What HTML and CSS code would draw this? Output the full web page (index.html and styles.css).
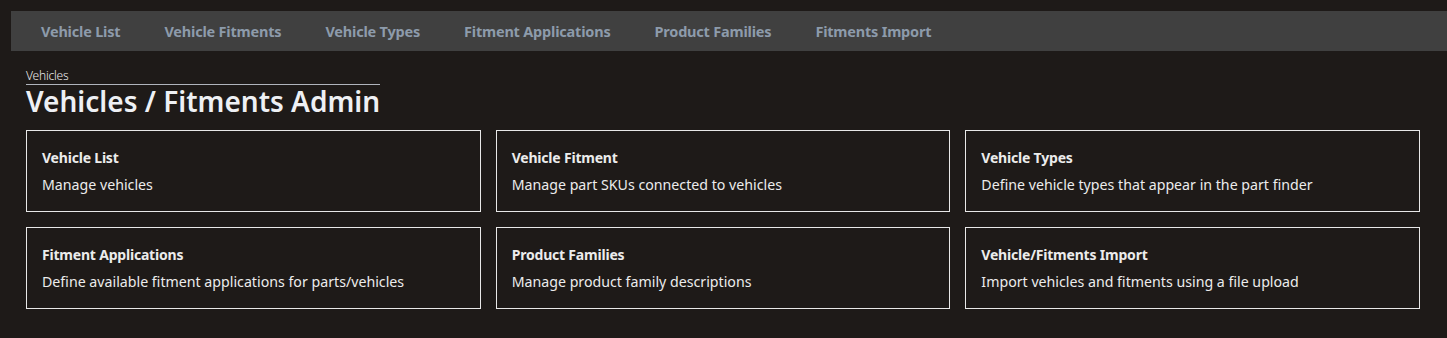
FILE: index.html
```html
<!DOCTYPE html>
<html>
<head>
<meta charset="utf-8">
<link rel="stylesheet" href="styles.css">
</head>
<body>
<nav class="topnav">
  <a class="nav-item">Vehicle List</a>
  <a class="nav-item">Vehicle Fitments</a>
  <a class="nav-item">Vehicle Types</a>
  <a class="nav-item">Fitment Applications</a>
  <a class="nav-item">Product Families</a>
  <a class="nav-item">Fitments Import</a>
</nav>
<main class="content">
  <header class="page-header">
    <div class="breadcrumb">Vehicles</div>
    <h1 class="title">Vehicles / Fitments Admin</h1>
  </header>
  <section class="cards">
    <div class="card"><div class="card-title">Vehicle List</div><div class="card-desc">Manage vehicles</div></div>
    <div class="card"><div class="card-title">Vehicle Fitment</div><div class="card-desc">Manage part SKUs connected to vehicles</div></div>
    <div class="card"><div class="card-title">Vehicle Types</div><div class="card-desc">Define vehicle types that appear in the part finder</div></div>
    <div class="card"><div class="card-title">Fitment Applications</div><div class="card-desc">Define available fitment applications for parts/vehicles</div></div>
    <div class="card"><div class="card-title">Product Families</div><div class="card-desc">Manage product family descriptions</div></div>
    <div class="card"><div class="card-title">Vehicle/Fitments Import</div><div class="card-desc">Import vehicles and fitments using a file upload</div></div>
  </section>
</main>
</body>
</html>
```
FILE: styles.css
```css
html, body {
  margin: 0;
  padding: 0;
  background: #1e1a18;
  color: #ececec;
  font-family: "Noto Sans", "Open Sans", sans-serif;
}
body {
  padding-top: 11px;
}
.topnav {
  margin-left: 11px;
  height: 40px;
  background: #404040;
  display: flex;
  align-items: center;
  padding-left: 8px;
}
.nav-item {
  padding: 0 22px;
  font-size: 14.5px;
  font-weight: 700;
  color: #8d9bab;
  letter-spacing: -0.2px;
}
.content {
  padding: 17px 27px 0 26px;
}
.page-header {
  display: inline-block;
}
.breadcrumb {
  font-size: 12px;
  font-weight: 300;
  line-height: 16px;
  border-bottom: 1px solid #b0b4bc;
  letter-spacing: -0.2px;
}
.title {
  margin: 0;
  font-size: 28px;
  font-weight: 600;
  line-height: 32px;
  color: #eef0f4;
}
.cards {
  margin-top: 13px;
  display: grid;
  grid-template-columns: repeat(3, 1fr);
  column-gap: 15px;
  row-gap: 15px;
}
.card {
  border: 1px solid #e8e8e8;
  box-sizing: border-box;
  height: 82px;
  padding: 17px 15px 0 15px;
}
.card-title {
  font-size: 14px;
  font-weight: 700;
  line-height: 19px;
  letter-spacing: -0.2px;
}
.card-desc {
  margin-top: 8px;
  font-size: 14.2px;
  line-height: 19px;
}
```
